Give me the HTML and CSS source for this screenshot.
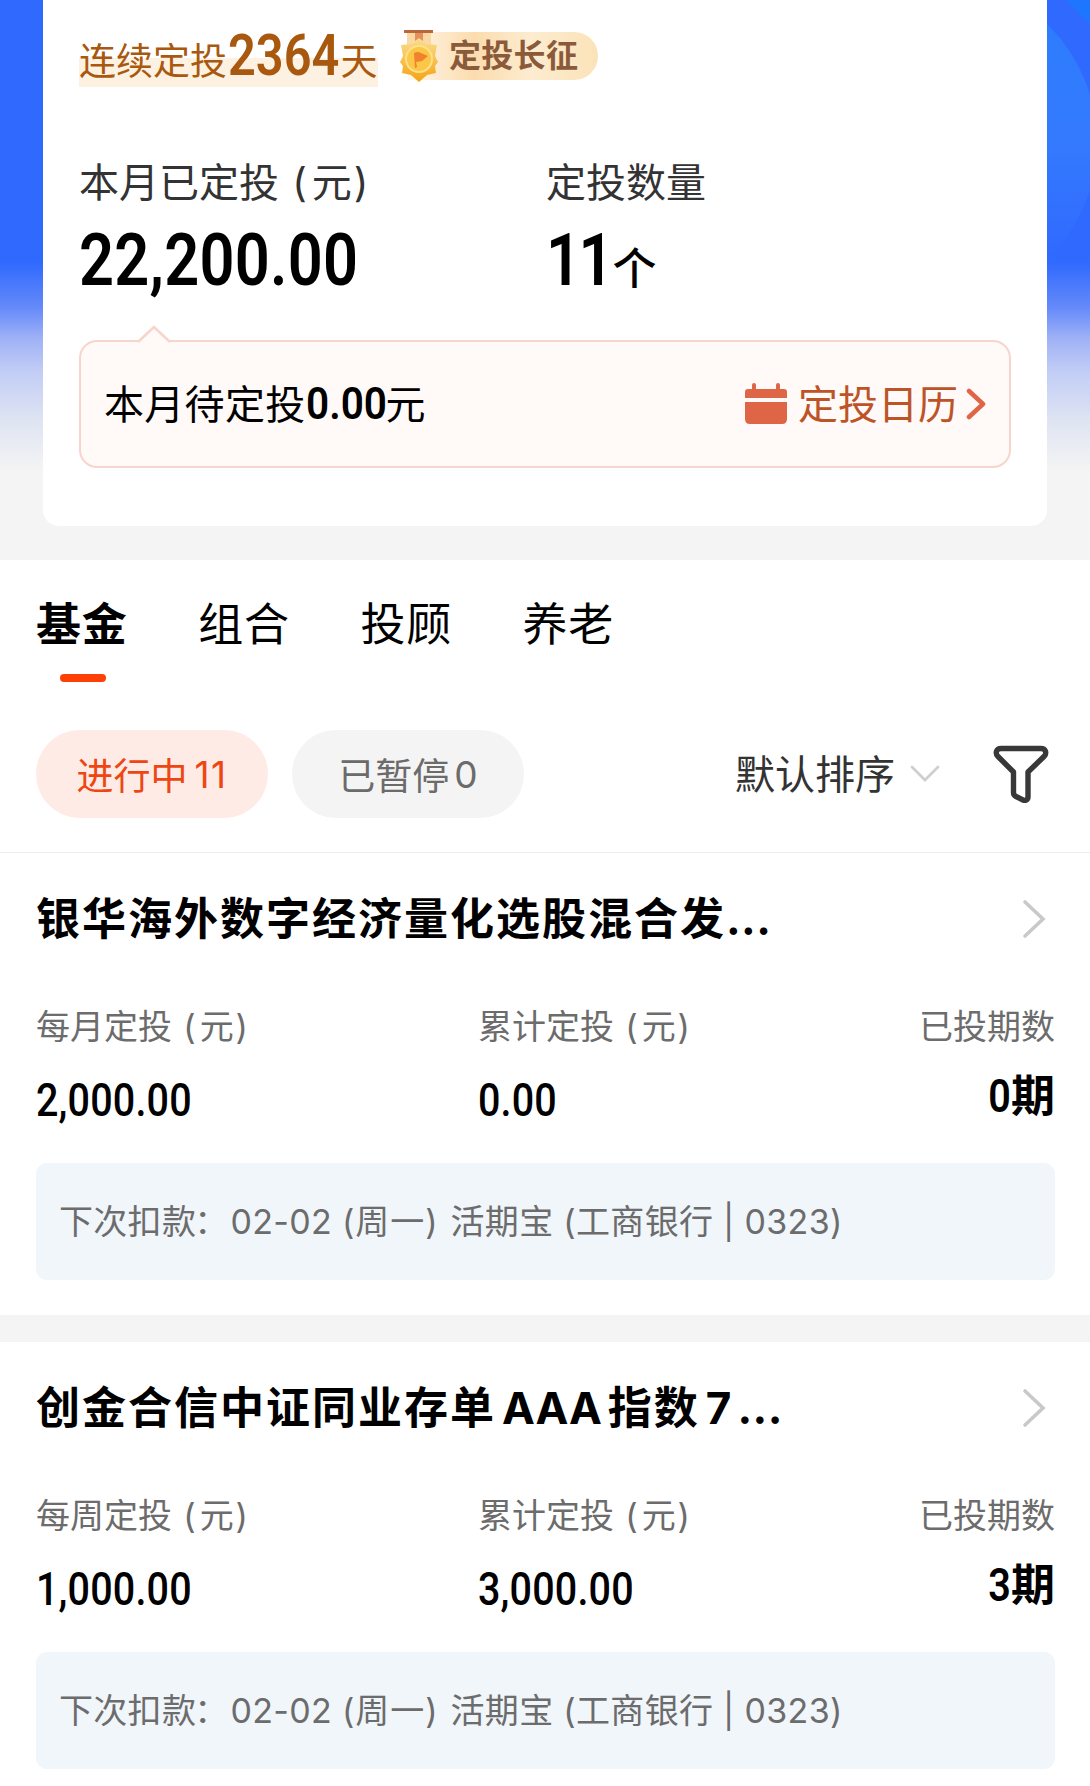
FILE: index.html
```
<!DOCTYPE html>
<html lang="zh-CN">
<head>
    <meta charset="UTF-8">
    <meta name="viewport" content="width=device-width, initial-scale=1.0">
    <title>我的定投</title>
    <link rel="stylesheet" href="styles.css">
</head>
<body>

<header class="hero">
    <div class="summary-card">
        <div class="streak-row">
            <div class="streak">连续定投<span class="num streak-num">2364</span>天</div>
            <div class="badge">
                <svg class="medal" width="42" height="54" viewBox="0 0 42 54">
                    <defs>
                        <linearGradient id="gold" x1="0" y1="0" x2="0" y2="1">
                            <stop offset="0" stop-color="#fbdc8c"/>
                            <stop offset="1" stop-color="#f5a312"/>
                        </linearGradient>
                    </defs>
                    <path d="M9 3h24v17H9z" fill="#fbd9a4"/>
                    <path d="M17 3h8v9l-4-3-4 3z" fill="#e5905a"/>
                    <path d="M6 1h29v3H6z" fill="#b9683c"/>
                    <path d="M21 10l7 5 11 1-2 11 3 6-3 4 1 7-9 2-8 7-8-7-9-2 1-7-3-4 3-6-2-11 11-1z" fill="url(#gold)"/>
                    <circle cx="21" cy="30" r="13" fill="#fcc646" stroke="#fde08a" stroke-width="2"/>
                    <path d="M16 24q4-2 7 0l7 3-6 5-6 1 1 5-2 1z" fill="#f0812d"/>
                </svg>
                <span>定投长征</span>
            </div>
        </div>

        <div class="stats">
            <div>
                <div class="stat-label">本月已定投 <span class="paren">(</span>元<span class="paren">)</span></div>
                <div class="stat-value"><span class="num">22,200.00</span></div>
            </div>
            <div>
                <div class="stat-label">定投数量</div>
                <div class="stat-value"><span class="num count-num">11</span><span class="unit">个</span></div>
            </div>
        </div>

        <div class="pending">
            <svg class="pending-arrow" width="34" height="18" viewBox="0 0 34 18">
                <path d="M1 17L17 2l16 15v1H1z" fill="#fff9f8"/>
                <path d="M1 17L17 2l16 15" fill="none" stroke="#f6d6cc" stroke-width="2.5"/>
            </svg>
            <div class="pending-text">本月待定投<span class="num pending-num">0.00</span>元</div>
            <a class="calendar-link">
                <svg width="42" height="42" viewBox="0 0 42 42" fill="#de6647">
                    <path d="M0 15V9q0-3 3-3h4V2q0-2 2-2t2 2v4h20V2q0-2 2-2t2 2v4h4q3 0 3 3v6z"/>
                    <path d="M0 19h42v17q0 5-5 5H5q-5 0-5-5z"/>
                </svg>
                <span>定投日历</span>
                <svg class="link-chevron" width="20" height="32" viewBox="0 0 20 32">
                    <path d="M3 3l14 13L3 29" fill="none" stroke="#de6647" stroke-width="4.5" stroke-linecap="round" stroke-linejoin="round"/>
                </svg>
            </a>
        </div>
    </div>
</header>

<main class="panel">
    <nav class="tabs">
        <a class="tab active">基金</a>
        <a class="tab">组合</a>
        <a class="tab">投顾</a>
        <a class="tab">养老</a>
    </nav>

    <div class="filters">
        <div class="pill active">进行中<span class="pill-count">11</span></div>
        <div class="pill">已暂停<span class="pill-count">0</span></div>
        <div class="sort">
            <span>默认排序</span>
            <svg width="30" height="18" viewBox="0 0 30 18">
                <path d="M2 2l13 13L28 2" fill="none" stroke="#cfcfcf" stroke-width="2.8" stroke-linecap="round"/>
            </svg>
        </div>
        <svg class="filter-icon" width="56" height="58" viewBox="0 0 56 58">
            <path d="M8 3.5h40c5 0 6 5 3 8L35 27v25c0 3-3 4-5 3l-7-3.5c-2-1-2.5-2-2.5-4V27L5 11.5C2 8.5 3 3.5 8 3.5z" fill="none" stroke="#383838" stroke-width="5.4" stroke-linejoin="round"/>
        </svg>
    </div>

    <section class="fund">
        <div class="fund-head">
            <h2>银华海外数字经济量化选股混合发<span class="dots">...</span></h2>
            <svg width="24" height="40" viewBox="0 0 24 40">
                <path d="M3 3l18 17L3 37" fill="none" stroke="#c9c9c9" stroke-width="3.6" stroke-linecap="round"/>
            </svg>
        </div>
        <div class="fund-data">
            <div>
                <div class="data-label">每月定投 <span class="paren">(</span>元<span class="paren">)</span></div>
                <div class="data-value"><span class="num">2,000.00</span></div>
            </div>
            <div>
                <div class="data-label">累计定投 <span class="paren">(</span>元<span class="paren">)</span></div>
                <div class="data-value"><span class="num">0.00</span></div>
            </div>
            <div class="periods">
                <div class="data-label">已投期数</div>
                <div class="data-value"><span class="num">0</span>期</div>
            </div>
        </div>
        <div class="next-pay">下次扣款<span class="colon">：</span>02-02 <span class="weekday">(周一)</span> 活期宝 (工商银行 | 0323)</div>
    </section>

    <section class="fund">
        <div class="fund-head">
            <h2>创金合信中证同业存单<span class="latin">AAA</span>指数<span class="latin">7</span><span class="dots">...</span></h2>
            <svg width="24" height="40" viewBox="0 0 24 40">
                <path d="M3 3l18 17L3 37" fill="none" stroke="#c9c9c9" stroke-width="3.6" stroke-linecap="round"/>
            </svg>
        </div>
        <div class="fund-data">
            <div>
                <div class="data-label">每周定投 <span class="paren">(</span>元<span class="paren">)</span></div>
                <div class="data-value"><span class="num">1,000.00</span></div>
            </div>
            <div>
                <div class="data-label">累计定投 <span class="paren">(</span>元<span class="paren">)</span></div>
                <div class="data-value"><span class="num">3,000.00</span></div>
            </div>
            <div class="periods">
                <div class="data-label">已投期数</div>
                <div class="data-value"><span class="num">3</span>期</div>
            </div>
        </div>
        <div class="next-pay">下次扣款<span class="colon">：</span>02-02 <span class="weekday">(周一)</span> 活期宝 (工商银行 | 0323)</div>
    </section>
</main>

</body>
</html>
```
FILE: styles.css
```
* {
    box-sizing: border-box;
}

body {
    margin: 0;
    height: 1786px;
    overflow: hidden;
    background-color: #f4f4f4;
    font-family: Inter, 'Noto Sans CJK SC', sans-serif;
    color: #000;
    white-space: nowrap;
}

svg {
    display: block;
    flex-shrink: 0;
}

/* narrow digits */
.num {
    display: inline-block;
    font-family: Roboto, sans-serif;
    font-weight: 600;
    line-height: 1;
    transform: scaleX(0.84);
    transform-origin: left;
}

.hero {
    position: relative;
    height: 560px;
    padding: 0 43px;
    overflow: hidden;
    background: linear-gradient(#3069fe 0, #3069fe 262px, #658af9 308px, #a0b2f6 339px, #c2cdf6 372px, #dde3f2 418px, #f4f4f4 470px);
}

/* light disc behind the card */
.hero::before {
    content: "";
    position: absolute;
    left: 769px;
    top: -22px;
    width: 328px;
    height: 328px;
    border-radius: 50%;
    background: linear-gradient(#2b7dfe, #347afe 50%, #3069fe 86%);
    clip-path: inset(0 0 43px 0);
}

.hero::after {
    content: "";
    position: absolute;
    right: 0;
    top: 0;
    width: 24px;
    height: 25px;
    background: linear-gradient(to top right, transparent 50%, #1f76fe 51%);
}

.summary-card {
    position: relative;
    height: 526px;
    padding: 30px 36px 0;
    background-color: #fff;
    border-radius: 0 0 16px 16px;
}

.streak-row {
    display: flex;
    height: 57px;
    align-items: flex-start;
}

.streak {
    width: 299px;
    height: 53px;
    margin-top: 4px;
    font-size: 37px;
    line-height: 56px;
    color: #a9590f;
    background: linear-gradient(transparent 24px, #fdf2e1 24px);
}

.streak-num {
    font-size: 58px;
    line-height: 40px;
    margin-left: 1px;
    margin-right: -20px;
}

.badge {
    display: flex;
    align-items: center;
    width: 190px;
    height: 48px;
    margin: 2px 0 0 30px;
    border-radius: 0 24px 24px 0;
    background: linear-gradient(90deg, #fff7ea, #fbdcae 35%, #fdecd0 65%, #fbe3b8);
    color: #8b5a3a;
    font-size: 32px;
    font-weight: 700;
    line-height: 48px;
}

.badge span {
    margin-left: 9px;
    letter-spacing: 0.3px;
}

.medal {
    margin-left: -10px;
}

.stats {
    display: grid;
    grid-template-columns: 467px 1fr;
    margin-top: 70px;
}

.stat-label {
    font-size: 40px;
    line-height: 52px;
    height: 50px;
    color: #333;
}

.paren {
    margin: 0 0.12em 0 0.05em;
    font-weight: 400;
}

.stat-value {
    height: 70px;
    margin-top: 17px;
    line-height: 70px;
    font-size: 73px;
}

.stat-value .num {
    letter-spacing: 0.3px;
}

.stat-value .count-num {
    margin-right: -11px;
    letter-spacing: -3px;
}

.unit {
    font-size: 44px;
    font-weight: 500;
}

.pending {
    position: relative;
    display: flex;
    align-items: center;
    justify-content: space-between;
    width: 932px;
    height: 128px;
    margin-top: 46px;
    padding: 0 23px 0 23px;
    background-color: #fff9f8;
    border: 2.5px solid #f6d6cc;
    border-radius: 18px;
}

.pending-arrow {
    position: absolute;
    left: 56px;
    top: -17px;
}

.pending-text {
    padding-top: 2px;
    font-size: 40px;
    line-height: 50px;
    letter-spacing: 0.3px;
}

.pending-num {
    font-size: 45px;
    letter-spacing: 0;
    transform: scaleX(0.9);
    margin-right: -10px;
}

.calendar-link {
    display: flex;
    align-items: center;
    font-size: 40px;
    line-height: 50px;
    color: #bd5428;
}

.calendar-link span {
    margin-left: 11px;
    padding-top: 2px;
}

.link-chevron {
    margin-left: 8px;
}

.panel {
    background-color: #fff;
    padding-top: 35px;
}

.tabs {
    display: flex;
    gap: 72px;
    padding-left: 36px;
}

.tab {
    width: 90.2px;
    height: 87px;
    font-size: 45px;
    line-height: 60px;
    letter-spacing: 0.8px;
}

.tab.active {
    font-weight: 700;
}

.tab.active::after {
    content: "";
    display: block;
    width: 46px;
    height: 8px;
    margin: 19px 0 0 24px;
    border-radius: 4px;
    background-color: #ff4006;
}

.filters {
    display: flex;
    align-items: center;
    height: 171px;
    padding: 48px 41px 34px 36px;
    border-bottom: 1px solid #ededed;
}

.pill {
    display: flex;
    align-items: center;
    justify-content: center;
    width: 232px;
    height: 88px;
    margin-right: 24px;
    border-radius: 44px;
    background-color: #f4f4f4;
    color: #6b6b6b;
    font-size: 37px;
}

.pill.active {
    background-color: #feebe5;
    color: #ee4613;
}

.pill-count {
    margin-left: 5px;
}

.pill.active .pill-count {
    margin-left: 7px;
    letter-spacing: 1.5px;
}

.sort {
    display: flex;
    align-items: center;
    margin-left: auto;
    font-size: 40px;
    line-height: 50px;
    color: #333;
}

.sort span {
    padding-top: 2px;
}

.sort svg {
    margin-left: 15px;
}

.filter-icon {
    margin-left: 53px;
}

.fund {
    padding: 37px 35px 35px 36px;
    border-bottom: 27px solid #f4f4f4;
}

.fund-head {
    display: flex;
    align-items: center;
    justify-content: space-between;
    height: 58px;
    padding-right: 9px;
}

.fund-head h2 {
    margin: 0;
    font-size: 44px;
    font-weight: 700;
    line-height: 60px;
    letter-spacing: 2px;
}

.latin {
    margin: 0 6px;
    letter-spacing: 0;
}

.dots {
    letter-spacing: 0.4px;
}

.fund-data {
    display: grid;
    grid-template-columns: 442px 1fr auto;
    margin-top: 59px;
}

.data-label {
    font-size: 34px;
    line-height: 40px;
    color: #6c6c6c;
}

.data-value {
    height: 50px;
    margin-top: 27px;
    font-size: 47px;
    line-height: 50px;
}

.data-value .num {
    font-weight: 500;
    letter-spacing: 0.2px;
}

.periods {
    text-align: right;
}

.periods .data-value {
    margin-top: 24px;
    font-size: 44px;
    font-weight: 700;
}

.periods .data-value .num {
    font-size: 47px;
    font-weight: 600;
    transform-origin: right;
}

.next-pay {
    height: 117px;
    margin-top: 39px;
    padding-left: 23px;
    border-radius: 11px;
    background-color: #f1f6fb;
    color: #6c6c6c;
    font-size: 34px;
    line-height: 117px;
    letter-spacing: 0.3px;
}

.colon {
    margin: 0 2px 0 -2px;
}

.weekday {
    margin-right: 2px;
    letter-spacing: 1px;
}
```
